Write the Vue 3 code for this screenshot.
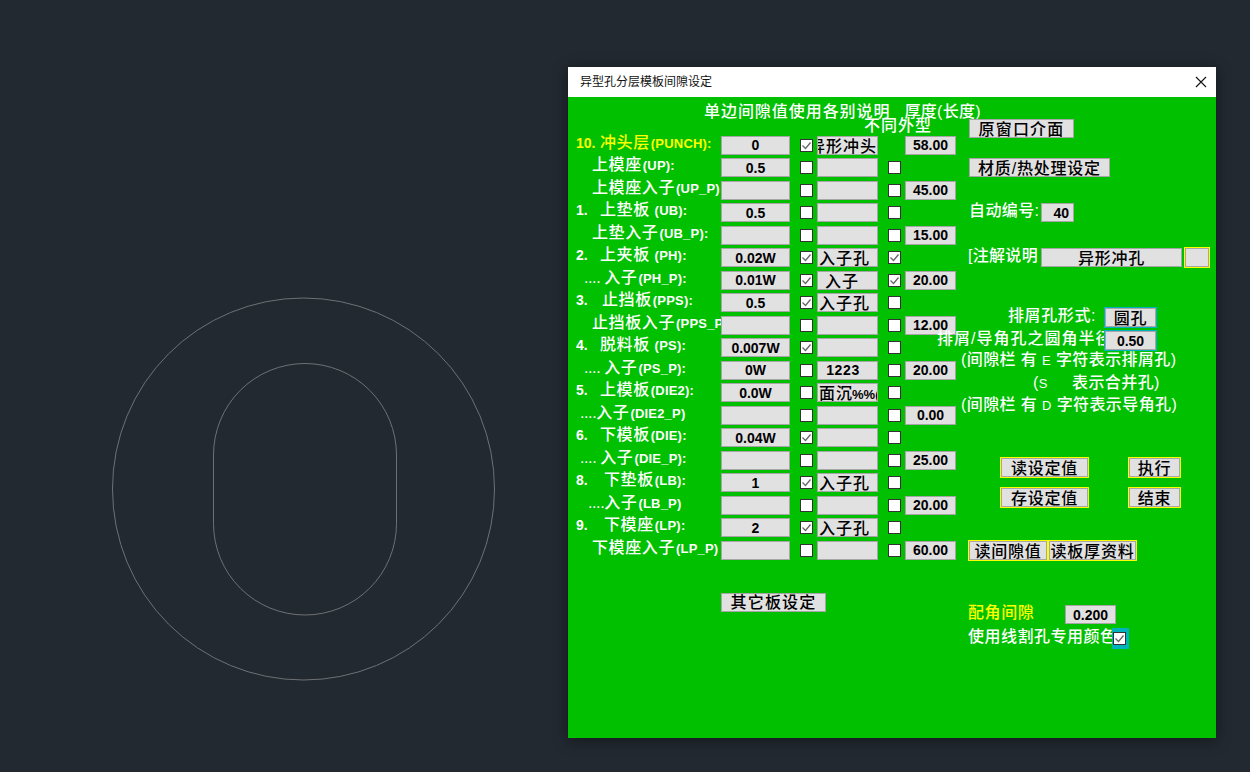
<template>
  <div class="desktop">
    <!-- 背景 CAD 图形 -->
    <svg class="drawing" width="568" height="772" viewBox="0 0 568 772">
      <circle cx="303.5" cy="489" r="191" />
      <rect x="213.5" y="363.5" width="183" height="251.5" rx="91.5" ry="91.5" />
    </svg>

    <div class="window">
      <div class="titlebar">
        <span class="title">异型孔分层模板间隙设定</span>
        <svg class="close" width="12" height="12" viewBox="0 0 12 12">
          <path d="M1 1 L11 11 M11 1 L1 11" />
        </svg>
      </div>

      <div class="body">
        <!-- 左侧各层板设定 -->
        <div class="left">
          <div class="head">
            <div class="head-main">单边间隙值使用各别说明<span class="head-thick">厚度(长度)</span></div>
            <div class="head-sub">不同外型</div>
          </div>

          <div v-for="row in rows" :key="row.code" class="row">
            <div class="label" :class="[row.indent, { yellow: row.yellow }]">
              <span v-if="row.num" class="num" :class="row.numClass">{{ row.num }}</span>
              <span v-if="row.dots" class="dots">{{ row.dots }}</span>
              <span class="name">{{ row.name }}</span><span class="code">{{ row.code }}</span>
            </div>
            <div class="field value">{{ row.gap }}</div>
            <span class="check c1">
              <svg v-if="row.c1" width="11" height="11" viewBox="0 0 11 11"><path d="M1.5 5.5 L4.5 8.5 L9.5 2.5" /></svg>
            </span>
            <div class="field note" :class="row.noteAlign">
              <span class="note-text" :class="{ 'note-num': row.noteNum }">{{ row.note }}<span v-if="row.noteTail" class="note-tail">{{ row.noteTail }}</span></span>
            </div>
            <span class="check c2" :class="{ none: row.c2 === null }">
              <svg v-if="row.c2" width="11" height="11" viewBox="0 0 11 11"><path d="M1.5 5.5 L4.5 8.5 L9.5 2.5" /></svg>
            </span>
            <div v-if="row.thick" class="field value thick">{{ row.thick }}</div>
          </div>

          <div class="field btn other">其它板设定</div>
        </div>

        <!-- 右侧功能区 -->
        <div class="right">
          <div class="field btn orig">原窗口介面</div>
          <div class="field btn material">材质/热处理设定</div>

          <div class="line auto">
            <span class="text auto-label">自动编号:</span>
            <div class="field value auto-no">40</div>
          </div>

          <div class="line remark">
            <span class="text remark-label">[注解说明</span>
            <div class="field btn remark-val">异形冲孔</div>
            <div class="field remark-box"></div>
          </div>

          <div class="line shape">
            <span class="text shape-label">排屑孔形式:</span>
            <div class="field btn teal small">圆孔</div>
          </div>

          <div class="line radius">
            <span class="text radius-label">排屑/导角孔之圆角半径</span>
            <div class="field value teal small">0.50</div>
          </div>

          <div class="tips">
            <div class="text tip">(间隙栏 有 <i>E</i> 字符表示排屑孔)</div>
            <div class="text tip tip-s">(<i>S</i>&nbsp;&nbsp;&nbsp;&nbsp;&nbsp;表示合并孔)</div>
            <div class="text tip">(间隙栏 有 <i>D</i> 字符表示导角孔)</div>
          </div>

          <div class="actions">
            <div class="field btn outlined">读设定值</div>
            <div class="field btn outlined">执行</div>
            <div class="field btn outlined">存设定值</div>
            <div class="field btn outlined">结束</div>
          </div>

          <div class="line reads">
            <div class="field btn outlined read-gap">读间隙值</div>
            <div class="field btn outlined read-thick">读板厚资料</div>
          </div>

          <div class="line corner">
            <span class="text yellow corner-label">配角间隙</span>
            <div class="field value corner-val">0.200</div>
          </div>

          <div class="line wire">
            <span class="text wire-label">使用线割孔专用颜色</span>
            <span class="wire-box">
              <span class="check">
                <svg width="11" height="11" viewBox="0 0 11 11"><path d="M1.5 5.5 L4.5 8.5 L9.5 2.5" /></svg>
              </span>
            </span>
          </div>
        </div>
      </div>
    </div>
  </div>
</template>

<script setup>
// 每行: 标签 / 间隙值 / 说明 / 厚度
const rows = [
  { num: '10.', name: '冲头层', code: '(PUNCH):', yellow: true, gap: '0', c1: true, note: '异形冲头', noteAlign: 'end', c2: null, thick: '58.00' },
  { name: '上模座', code: '(UP):', indent: 'i16', gap: '0.5', c1: false, note: '', c2: false },
  { name: '上模座入子', code: '(UP_P)', indent: 'i16', gap: '', c1: false, note: '', c2: false, thick: '45.00' },
  { num: '1.', name: '上垫板', code: ' (UB):', gap: '0.5', c1: false, note: '', c2: false },
  { name: '上垫入子', code: '(UB_P):', indent: 'i16', gap: '', c1: false, note: '', c2: false, thick: '15.00' },
  { num: '2.', name: '上夹板', code: ' (PH):', gap: '0.02W', c1: true, note: '入子孔', noteAlign: 'start', c2: true },
  { dots: '.... ', name: '入子', code: '(PH_P):', indent: 'i8', gap: '0.01W', c1: true, note: '入子  ', c2: true, thick: '20.00' },
  { num: '3.', numClass: 'n-wide', name: '止挡板', code: '(PPS):', gap: '0.5', c1: true, note: '入子孔', noteAlign: 'start', c2: false },
  { name: '止挡板入子', code: '(PPS_P)', indent: 'i16', gap: '', c1: false, note: '', c2: false, thick: '12.00' },
  { num: '4.', name: '脱料板', code: ' (PS):', gap: '0.007W', c1: true, note: '', c2: false },
  { dots: '.... ', name: '入子', code: '(PS_P):', indent: 'i8', gap: '0W', c1: false, note: '1223  ', noteNum: true, c2: false, thick: '20.00' },
  { num: '5.', name: '上模板', code: '(DIE2):', gap: '0.0W', c1: false, note: '面沉', noteTail: '%%(C', noteAlign: 'start', c2: false },
  { dots: '....', name: '入子', code: '(DIE2_P)', indent: 'i4', gap: '', c1: false, note: '', c2: false, thick: '0.00' },
  { num: '6.', name: '下模板', code: '(DIE):', gap: '0.04W', c1: true, note: '', c2: false },
  { dots: '.... ', name: '入子', code: '(DIE_P):', indent: 'i4', gap: '', c1: false, note: '', c2: false, thick: '25.00' },
  { num: '8.', numClass: 'n-wider', name: '下垫板', code: '(LB):', gap: '1', c1: true, note: '入子孔', noteAlign: 'start', c2: false },
  { dots: '....', name: '入子', code: '(LB_P)', indent: 'i12', gap: '', c1: false, note: '', c2: false, thick: '20.00' },
  { num: '9.', numClass: 'n-wider', name: '下模座', code: '(LP):', gap: '2', c1: true, note: '入子孔', noteAlign: 'start', c2: false },
  { name: '下模座入子', code: '(LP_P)', indent: 'i16', gap: '', c1: false, note: '', c2: false, thick: '60.00' }
]
</script>

<style>
html, body {
  margin: 0;
  background: #232931;
}
</style>

<style scoped>
.desktop {
  display: flex;
  width: 1250px;
  height: 772px;
  overflow: hidden;
  background: #232931;
  font-family: "Liberation Sans", "Noto Sans CJK SC", sans-serif;
}

.drawing {
  flex: none;
}

.drawing circle,
.drawing rect {
  fill: none;
  stroke: #6e7174;
  stroke-width: 1;
}

.window {
  flex: none;
  width: 648px;
  height: 671px;
  margin-top: 67px;
  box-shadow: 0 2px 14px rgba(0, 0, 0, 0.45);
  display: flex;
  flex-direction: column;
}

.titlebar {
  box-sizing: border-box;
  height: 30px;
  flex: none;
  background: #fff;
  display: flex;
  align-items: center;
  justify-content: space-between;
  padding: 0 9px 1px 12px;
}

.title {
  font-size: 12px;
  line-height: 14px;
  color: #111;
}

.close path {
  fill: none;
  stroke: #111;
  stroke-width: 1.1;
}

.body {
  flex: 1;
  background: #00c000;
  display: flex;
  padding-left: 8px;
  color: #fff;
}

.left {
  width: 380px;
  flex: none;
}

.right {
  width: 248px;
  margin-left: 12px;
  flex: none;
}

.head {
  height: 38.9px;
  font-size: 16px;
  font-weight: 500;
  white-space: nowrap;
}

.head-main {
  padding: 5px 0 0 128px;
  line-height: 20px;
  height: 20px;
  letter-spacing: 0.95px;
}

.head-thick {
  margin-left: 14px;
  letter-spacing: 0.3px;
}

.head-sub {
  margin-top: -4px;
  padding-left: 288px;
  line-height: 16px;
  letter-spacing: 1px;
}

.row {
  height: 22.5px;
  display: flex;
  align-items: flex-start;
}

.label {
  width: 145px;
  flex: none;
  height: 20px;
  margin-top: -2px;
  line-height: 17px;
  overflow: hidden;
  white-space: pre;
  font-size: 16px;
  font-weight: 500;
}

.i4 { padding-left: 4px; width: 141px; }
.i8 { padding-left: 8px; width: 137px; }
.i12 { padding-left: 12px; width: 133px; }
.i16 { padding-left: 16px; width: 129px; }

.num {
  display: inline-block;
  width: 24px;
  font-size: 14px;
  font-weight: 700;
}

.n-wide { width: 26px; }
.n-wider { width: 28px; }

.dots {
  letter-spacing: -0.4px;
}

.name {
  letter-spacing: 0.6px;
}

.code {
  margin-left: 1px;
  letter-spacing: 0.2px;
  font-size: 13px;
  font-weight: 700;
}

.yellow {
  color: #ffff00;
}

.field {
  box-sizing: border-box;
  height: 19px;
  background: #e1e1e1;
  border: 1px solid #a6a6a6;
  color: #000;
  overflow: hidden;
  white-space: nowrap;
  display: flex;
  align-items: center;
  justify-content: center;
  flex: none;
}

.value {
  font-size: 14px;
  font-weight: 700;
}

.row .value {
  width: 69px;
}

.row .thick {
  width: 51px;
  margin-left: 4px;
}

.note {
  width: 61px;
  margin-left: 4px;
  padding-bottom: 1px;
  font-size: 16px;
  font-weight: 500;
  letter-spacing: 1px;
}

.note-text {
  white-space: pre;
  flex: none;
}

.note-num {
  font-size: 14px;
  font-weight: 700;
  letter-spacing: 0.6px;
}

.note-tail {
  margin-left: -1px;
  font-size: 13px;
  font-weight: 700;
  letter-spacing: 0;
}

.note.start {
  justify-content: flex-start;
  padding-left: 1px;
}

.note.end {
  justify-content: flex-end;
}

.check {
  box-sizing: border-box;
  width: 13px;
  height: 13px;
  flex: none;
  background: #fff;
  border: 1px solid #333;
  display: flex;
  align-items: center;
  justify-content: center;
}

.check path {
  fill: none;
  stroke: #666;
  stroke-width: 1.3;
}

.row .check {
  margin-top: 3px;
}

.c1 { margin-left: 10px; }
.c2 { margin-left: 10px; }
.c2.none { visibility: hidden; }

.btn {
  padding-bottom: 2px;
  font-size: 16px;
  font-weight: 500;
  letter-spacing: 0.8px;
}

.other {
  width: 105px;
  margin: 29.6px 0 0 145px;
  letter-spacing: 1.2px;
}

.text {
  font-size: 16px;
  font-weight: 500;
  line-height: 20px;
  white-space: nowrap;
}

.line {
  display: flex;
  align-items: center;
}

.line .text {
  margin-bottom: 4px;
}

.orig {
  width: 105px;
  margin: 22px 0 0 1px;
  letter-spacing: 1.2px;
}

.material {
  width: 141px;
  margin: 20px 0 0 1px;
}

.auto {
  height: 19px;
  margin: 26px 0 0 1px;
}

.auto-label {
  width: 72px;
  letter-spacing: 0.4px;
}

.auto-no {
  width: 33px;
  justify-content: flex-end;
  padding-right: 4px;
}

.remark {
  margin: 25px 0 0 0;
  height: 21px;
}

.remark-label {
  width: 73px;
  overflow: hidden;
  letter-spacing: 0.3px;
}

.remark-val {
  width: 141px;
}

.remark-box {
  width: 26px;
  height: 21px;
  margin-left: 2px;
  border: 1px solid #ffff00;
  box-shadow: inset 0 0 0 1px #a6a6a6;
}

.shape {
  margin: 39px 0 0 40px;
  height: 21px;
}

.shape-label {
  width: 96px;
  letter-spacing: 0.6px;
}

.small {
  width: 53px;
  height: 21px;
}

.teal {
  border: 1px solid #00b2bd;
  box-shadow: inset 0 0 0 1px #a6a6a6;
}

.radius {
  margin: 2px 0 0 -31px;
  height: 21px;
}

.radius-label {
  width: 167px;
  overflow: hidden;
  letter-spacing: 1px;
}

.tips {
  margin: -2px 0 0 -7px;
}

.tip {
  height: 22.5px;
  line-height: 22.5px;
  letter-spacing: 0.4px;
}

.tip i {
  font-style: normal;
  font-size: 13px;
}

.tip-s {
  padding-left: 72px;
}

.actions {
  display: grid;
  grid-template-columns: 89px 53px;
  column-gap: 39px;
  row-gap: 9px;
  margin: 40.5px 0 0 32px;
}

.outlined {
  height: 21px;
  border: 1px solid #ffff00;
  box-shadow: inset 0 0 0 1px #a6a6a6;
}

.reads {
  margin-top: 32px;
}

.read-gap {
  width: 80px;
}

.read-thick {
  width: 89px;
}

.corner {
  margin-top: 44px;
  height: 19px;
}

.corner-label {
  width: 97px;
  letter-spacing: 0.6px;
}

.corner-val {
  width: 51px;
}

.wire {
  margin-top: 4px;
  height: 21px;
}

.wire-label {
  width: 144px;
  overflow: hidden;
  letter-spacing: 0.5px;
}

.wire-box {
  box-sizing: border-box;
  width: 17px;
  height: 21px;
  background: #00b2bd;
  padding: 4px 0 0 1px;
}
</style>
